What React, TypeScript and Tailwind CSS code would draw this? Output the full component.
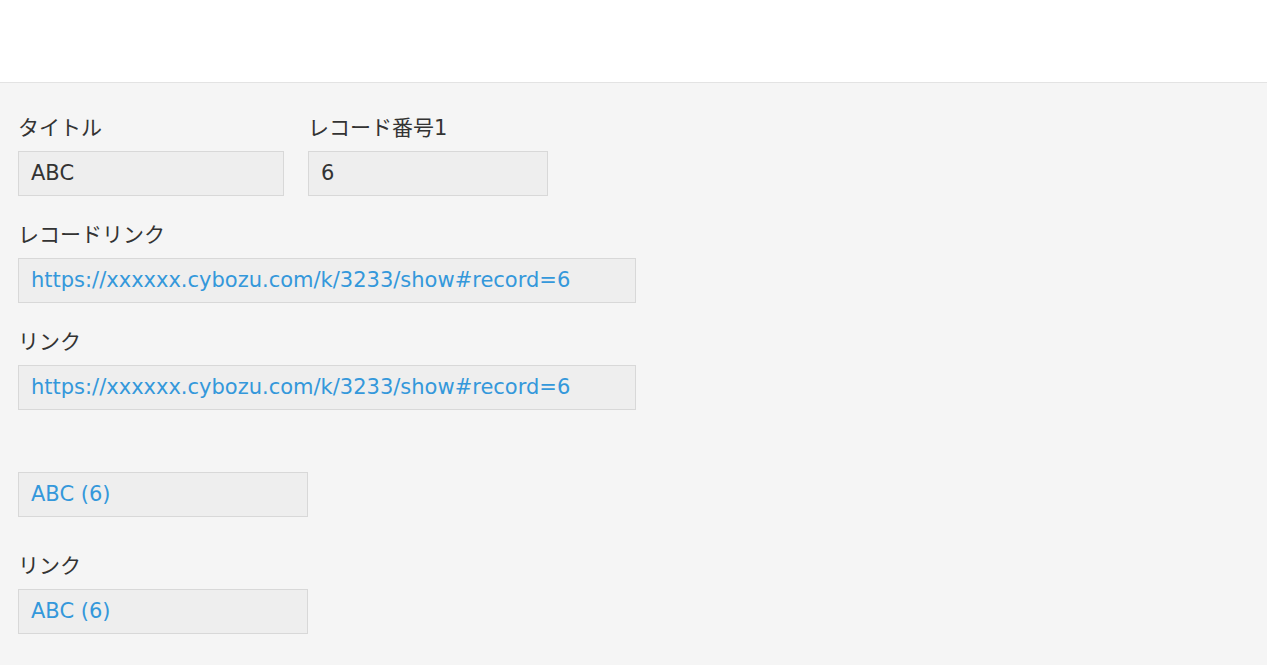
import React from 'react';

const font = { fontFamily: '"DejaVu Sans", "Noto Sans CJK JP", sans-serif' };

interface FieldProps {
  label: string;
  value: string;
  width: string;
  link?: boolean;
}

const Field: React.FC<FieldProps> = ({ label, value, width, link }) => (
  <div className={`flex flex-col ${width}`}>
    <div className="h-[28px] mb-[9px] text-[21px] leading-[28px] text-[#333333] whitespace-nowrap">
      {label}
    </div>
    <div className="h-[45px] border border-[#d8d8d8] bg-[#eeeeee] px-[12px] flex items-center text-[21px] whitespace-nowrap overflow-hidden">
      {link ? (
        <a href="#" className="text-[#3498db]">{value}</a>
      ) : (
        <span className="text-[#333333]">{value}</span>
      )}
    </div>
  </div>
);

const App: React.FC = () => {
  const url = 'https://xxxxxx.cybozu.com/k/3233/show#record=6';
  return (
    <div className="min-h-[665px] bg-[#f5f5f5]" style={font}>
      <div className="h-[83px] bg-white border-b border-[#e3e3e3]" />
      <div className="px-[18px] pt-[31px] pb-[30px] flex flex-col gap-[25px]">
        <div className="flex gap-[24px]">
          <Field label="タイトル" value="ABC" width="w-[266px]" />
          <Field label="レコード番号1" value="6" width="w-[240px]" />
        </div>
        <Field label="レコードリンク" value={url} width="w-[618px]" link />
        <Field label="リンク" value={url} width="w-[618px]" link />
        <Field label="" value="ABC (6)" width="w-[290px]" link />
        <div className="mt-[10px]">
          <Field label="リンク" value="ABC (6)" width="w-[290px]" link />
        </div>
      </div>
    </div>
  );
};

export default App;
